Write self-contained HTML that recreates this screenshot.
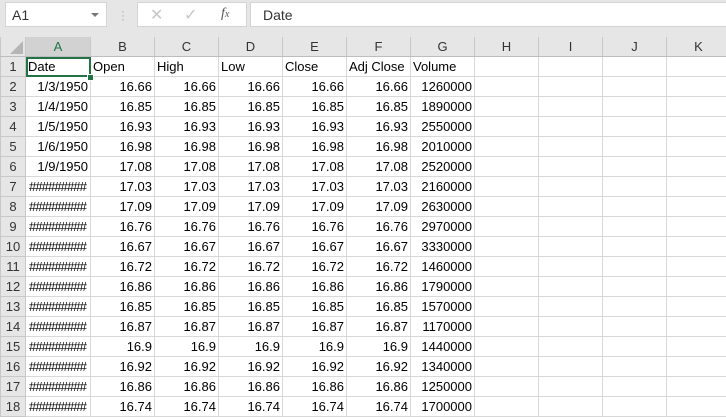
<!DOCTYPE html><html><head><style>
body{margin:0;width:726px;height:407px;overflow:hidden;background:#e6e6e6;font-family:"Liberation Sans",Calibri,sans-serif;position:relative}
.box{position:absolute;background:#fff;border:1px solid #d4d4d4;box-sizing:border-box}
table{position:absolute;left:0;top:37px;width:730px;border-collapse:collapse;table-layout:fixed;font-size:13px}
td{height:19px;border:1px solid #d8d8d8;padding:0 2px;white-space:nowrap;overflow:hidden;background:#fff;color:#000;text-align:right}
td.l{text-align:left}
td.hh{text-align:left;letter-spacing:-0.9px;font-size:13px;padding-left:3px}
th{background:#e6e6e6;font-weight:normal;color:#333;border:1px solid #c8c8c8;border-top:none;height:19px;font-size:13px;padding:0;overflow:hidden}
tr.h th{border-bottom:1px solid #bdbdbd}
th.sel{background:#d2d2d2;color:#217346;border-bottom:2px solid #217346}
</style></head><body>
<div class="box" style="left:5px;top:2px;width:102px;height:25px;font-size:14px;padding:4px 0 0 6px;color:#333">A1<span style="position:absolute;right:7px;top:10px;border-left:4px solid transparent;border-right:4px solid transparent;border-top:4px solid #777"></span></div>
<div style="position:absolute;left:121px;top:9px;color:#aaa;font-size:12px;line-height:4px">·<br>·<br>·</div>
<div class="box" style="left:137px;top:2px;width:110px;height:25px;color:#c6c6c6;font-size:16px">
<span style="position:absolute;left:12px;top:2px">✕</span><span style="position:absolute;left:46px;top:2px">✓</span><span style="position:absolute;left:83px;top:3px;color:#555;font-family:'Liberation Serif',serif;font-style:italic;font-size:14px">f<span style="font-size:10px">x</span></span></div>
<div class="box" style="left:250px;top:2px;width:480px;height:25px;font-size:14px;padding:4px 0 0 12px;color:#333">Date</div>
<table>
<colgroup><col style="width:25px"><col style="width:65px"><col style="width:64px"><col style="width:64px"><col style="width:64px"><col style="width:64px"><col style="width:64px"><col style="width:64px"><col style="width:64px"><col style="width:64px"><col style="width:64px"><col style="width:64px"></colgroup>
<tr class="h"><th style="background:#e6e6e6;position:relative"><span style="position:absolute;right:2px;bottom:2px;border-left:13px solid transparent;border-bottom:13px solid #b5b5b5"></span></th><th class="sel">A</th><th>B</th><th>C</th><th>D</th><th>E</th><th>F</th><th>G</th><th>H</th><th>I</th><th>J</th><th>K</th></tr>
<tr><th>1</th><td class="l" style="outline:2px solid #217346;outline-offset:-2px">Date</td><td class="l">Open</td><td class="l">High</td><td class="l">Low</td><td class="l">Close</td><td class="l">Adj Close</td><td class="l">Volume</td><td></td><td></td><td></td><td></td></tr>
<tr><th>2</th><td>1/3/1950</td><td>16.66</td><td>16.66</td><td>16.66</td><td>16.66</td><td>16.66</td><td>1260000</td><td></td><td></td><td></td><td></td></tr>
<tr><th>3</th><td>1/4/1950</td><td>16.85</td><td>16.85</td><td>16.85</td><td>16.85</td><td>16.85</td><td>1890000</td><td></td><td></td><td></td><td></td></tr>
<tr><th>4</th><td>1/5/1950</td><td>16.93</td><td>16.93</td><td>16.93</td><td>16.93</td><td>16.93</td><td>2550000</td><td></td><td></td><td></td><td></td></tr>
<tr><th>5</th><td>1/6/1950</td><td>16.98</td><td>16.98</td><td>16.98</td><td>16.98</td><td>16.98</td><td>2010000</td><td></td><td></td><td></td><td></td></tr>
<tr><th>6</th><td>1/9/1950</td><td>17.08</td><td>17.08</td><td>17.08</td><td>17.08</td><td>17.08</td><td>2520000</td><td></td><td></td><td></td><td></td></tr>
<tr><th>7</th><td class="hh">#########</td><td>17.03</td><td>17.03</td><td>17.03</td><td>17.03</td><td>17.03</td><td>2160000</td><td></td><td></td><td></td><td></td></tr>
<tr><th>8</th><td class="hh">#########</td><td>17.09</td><td>17.09</td><td>17.09</td><td>17.09</td><td>17.09</td><td>2630000</td><td></td><td></td><td></td><td></td></tr>
<tr><th>9</th><td class="hh">#########</td><td>16.76</td><td>16.76</td><td>16.76</td><td>16.76</td><td>16.76</td><td>2970000</td><td></td><td></td><td></td><td></td></tr>
<tr><th>10</th><td class="hh">#########</td><td>16.67</td><td>16.67</td><td>16.67</td><td>16.67</td><td>16.67</td><td>3330000</td><td></td><td></td><td></td><td></td></tr>
<tr><th>11</th><td class="hh">#########</td><td>16.72</td><td>16.72</td><td>16.72</td><td>16.72</td><td>16.72</td><td>1460000</td><td></td><td></td><td></td><td></td></tr>
<tr><th>12</th><td class="hh">#########</td><td>16.86</td><td>16.86</td><td>16.86</td><td>16.86</td><td>16.86</td><td>1790000</td><td></td><td></td><td></td><td></td></tr>
<tr><th>13</th><td class="hh">#########</td><td>16.85</td><td>16.85</td><td>16.85</td><td>16.85</td><td>16.85</td><td>1570000</td><td></td><td></td><td></td><td></td></tr>
<tr><th>14</th><td class="hh">#########</td><td>16.87</td><td>16.87</td><td>16.87</td><td>16.87</td><td>16.87</td><td>1170000</td><td></td><td></td><td></td><td></td></tr>
<tr><th>15</th><td class="hh">#########</td><td>16.9</td><td>16.9</td><td>16.9</td><td>16.9</td><td>16.9</td><td>1440000</td><td></td><td></td><td></td><td></td></tr>
<tr><th>16</th><td class="hh">#########</td><td>16.92</td><td>16.92</td><td>16.92</td><td>16.92</td><td>16.92</td><td>1340000</td><td></td><td></td><td></td><td></td></tr>
<tr><th>17</th><td class="hh">#########</td><td>16.86</td><td>16.86</td><td>16.86</td><td>16.86</td><td>16.86</td><td>1250000</td><td></td><td></td><td></td><td></td></tr>
<tr><th>18</th><td class="hh">#########</td><td>16.74</td><td>16.74</td><td>16.74</td><td>16.74</td><td>16.74</td><td>1700000</td><td></td><td></td><td></td><td></td></tr>
</table>
<div style="position:absolute;left:87px;top:74px;width:5px;height:5px;background:#217346;border:1px solid #fff"></div>
</body></html>
